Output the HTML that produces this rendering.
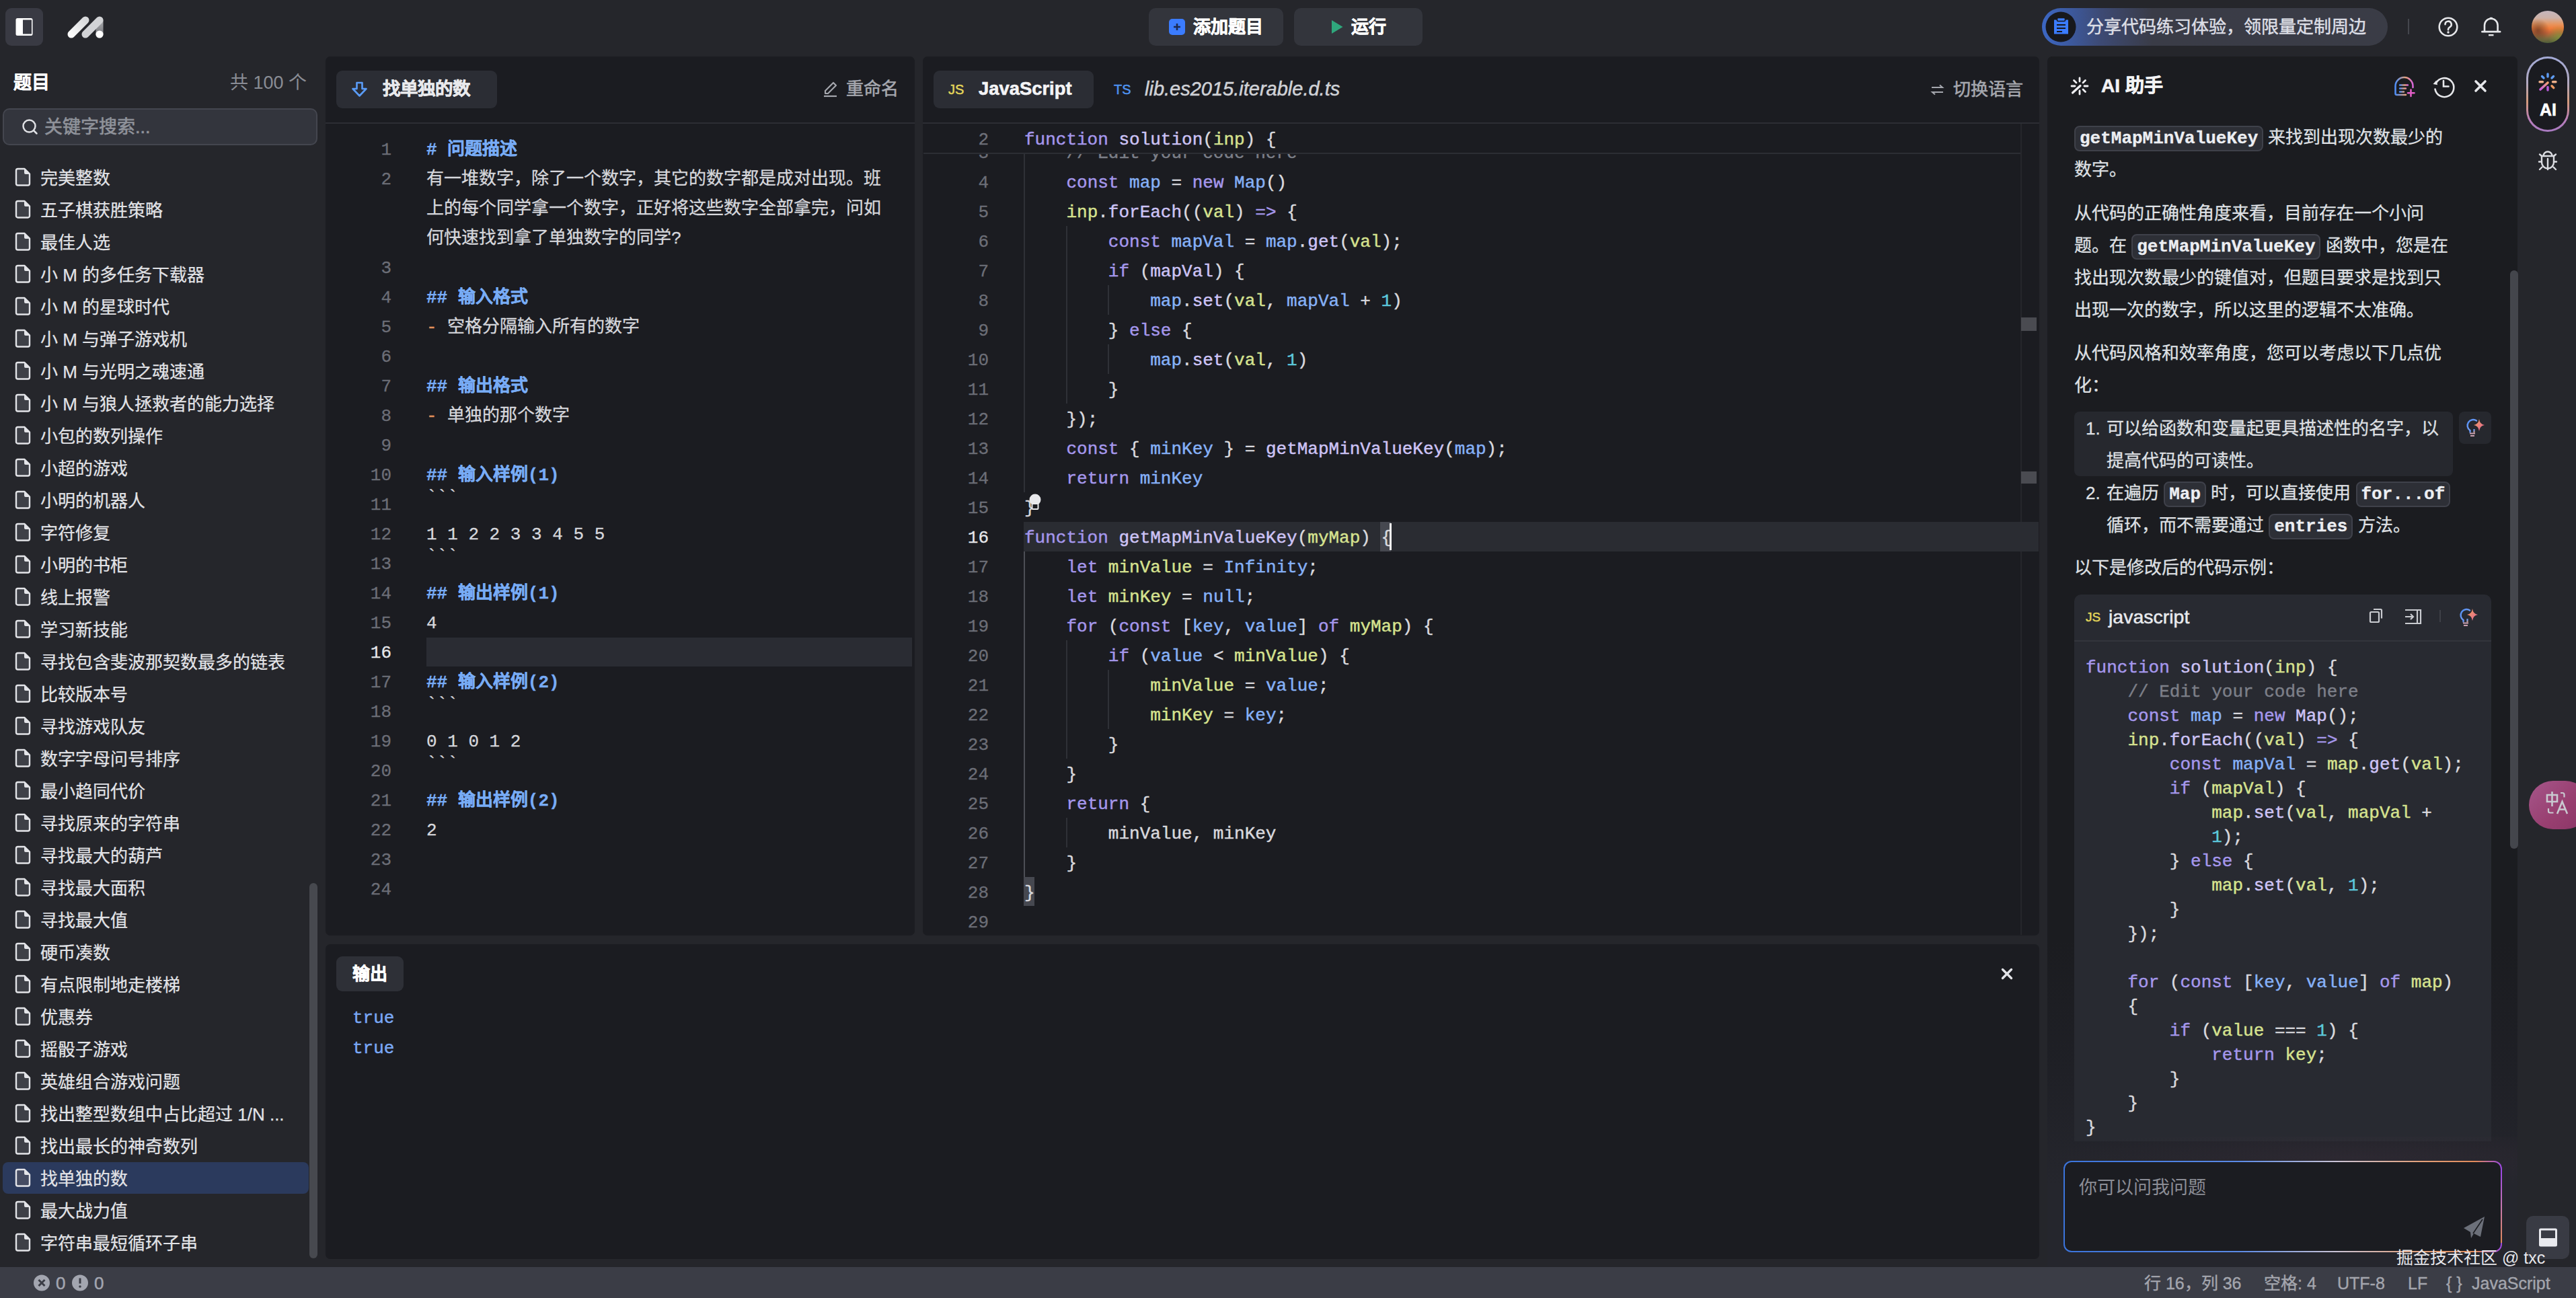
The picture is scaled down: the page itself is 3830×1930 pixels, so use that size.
<!DOCTYPE html><html lang="zh-CN"><head><meta charset="utf-8"><style>
*{box-sizing:border-box}
html,body{margin:0;padding:0;width:3830px;height:1930px;overflow:hidden;background:#25262b;}
body{position:relative;font-family:"Liberation Sans",sans-serif;color:#d9dade;}
div{position:absolute}
.t{white-space:nowrap;font-size:26px}
.m{white-space:nowrap;font-family:"Liberation Mono",monospace;font-size:26px;-webkit-text-stroke:0.45px currentColor}
.kw{color:#a597ec} .fn{color:#cdc3f5} .v{color:#86b1f7} .p{color:#d6e28f} .n{color:#5cc8dc} .pu{color:#d9d9de} .c{color:#7c7f88}
.hd{color:#78acf6;font-weight:bold} .dash{color:#e0915c}
.ln{white-space:nowrap;font-family:"Liberation Mono",monospace;font-size:26px;color:#6e7079;text-align:right;width:80px;-webkit-text-stroke:0.3px currentColor}
.ic{ink:0}
svg{position:absolute;overflow:visible}
@media (max-width:2600px){html{zoom:0.5}}
</style></head><body>
<div style="left:8px;top:12px;width:56px;height:56px;background:#393a43;border-radius:9px"></div>
<svg style="left:0;top:0" width="80" height="80"><rect x="23.5" y="27" width="25" height="26" rx="2.5" fill="#fff"/><rect x="34" y="29.5" width="13" height="21" fill="#393a43"/></svg>
<svg style="left:90px;top:14px" width="80" height="56" viewBox="90 14 80 56">
<defs><linearGradient id="lg1" x1="0" y1="1" x2="1" y2="0"><stop offset="0" stop-color="#fafafa"/><stop offset="1" stop-color="#d8d9db"/></linearGradient>
<linearGradient id="lg2" gradientUnits="userSpaceOnUse" x1="148" y1="25" x2="148" y2="57"><stop offset="0" stop-color="#b5b6ba"/><stop offset="1" stop-color="#6c6d72"/></linearGradient></defs>
<line x1="106" y1="51" x2="127" y2="30" stroke="url(#lg1)" stroke-width="11" stroke-linecap="round"/>
<line x1="148" y1="31" x2="148" y2="51" stroke="url(#lg2)" stroke-width="11" stroke-linecap="round"/>
<line x1="127" y1="51" x2="148" y2="30" stroke="#d2d3d6" stroke-width="11" stroke-linecap="round"/>
<circle cx="148" cy="51" r="5.6" fill="#fff"/>
</svg>
<div style="left:1708px;top:12px;width:200px;height:56px;background:#33353c;border-radius:10px"></div>
<div style="left:1738px;top:28px;width:24px;height:24px;background:#3b7cff;border-radius:5px"></div>
<svg style="left:0;top:0" width="1" height="1"><path d="M1745 40h10M1750 35v10" stroke="#1c2a52" stroke-width="2.6"/></svg>
<div class="t" style="left:1774px;top:12.0px;line-height:56px;color:#fff;font-weight:bold;-webkit-text-stroke:0.6px currentColor;font-size:26px">添加题目</div>
<div style="left:1924px;top:12px;width:191px;height:56px;background:#33353c;border-radius:10px"></div>
<svg style="left:0;top:0" width="1" height="1"><path d="M1980 30L1996.5 40L1980 50Z" fill="#2fa77c"/></svg>
<div class="t" style="left:2009px;top:12.0px;line-height:56px;color:#fff;font-weight:bold;-webkit-text-stroke:0.6px currentColor;font-size:26px">运行</div>
<div style="left:3036px;top:12px;width:514px;height:56px;background:linear-gradient(90deg,#3c67c4 0%,#3d4a74 17%,#3a3c47 32%,#3a3c46 100%);border-radius:28px"></div>
<svg style="left:0;top:0" width="1" height="1"><circle cx="3064" cy="40" r="22.5" fill="#17181c"/><path d="M3054 29.5h21v21h-21z" fill="#3b7cff"/><rect x="3058.5" y="26.5" width="12" height="5" rx="1.5" fill="#3b7cff" stroke="#17181c" stroke-width="1.6"/><path d="M3058 37h13M3058 42h13M3058 47h8" stroke="#17181c" stroke-width="2.2"/></svg>
<div class="t" style="left:3102px;top:12.0px;line-height:56px;color:#dcdee5;font-size:26px;font-weight:500;-webkit-text-stroke:0.5px currentColor">分享代码练习体验，领限量定制周边</div>
<div style="left:3580px;top:28px;width:2px;height:23px;background:#44464d"></div>
<svg style="left:0;top:0" width="1" height="1"><circle cx="3640" cy="40" r="13.3" fill="none" stroke="#e6e7ea" stroke-width="2.6"/><path d="M3635.5 36.2a4.6 4.6 0 1 1 6.8 4.1c-1.4 .8-2.3 1.6-2.3 3.3v.6" fill="none" stroke="#e6e7ea" stroke-width="2.6" stroke-linecap="round"/><circle cx="3640" cy="48" r="1.7" fill="#e6e7ea"/></svg>
<svg style="left:0;top:0" width="1" height="1"><path d="M3694 47v-9.5a9.8 9.8 0 0 1 19.6 0V47" fill="none" stroke="#e6e7ea" stroke-width="2.6"/><path d="M3690.5 47.2h26.5" stroke="#e6e7ea" stroke-width="2.8" stroke-linecap="round"/><path d="M3700 52.2h7.5" stroke="#e6e7ea" stroke-width="2.4"/><rect x="3701.5" y="25.8" width="4.6" height="2.6" rx="1.2" fill="#e6e7ea"/></svg>
<div style="left:3764px;top:16px;width:48px;height:48px;border-radius:50%;background:linear-gradient(180deg,#c4b6bd 0%,#cdb2a8 22%,#e8945c 42%,#ef7b3a 55%,#c8663a 68%,#7d6a3e 85%,#4f5e3a 100%)"></div>
<div style="left:3764px;top:16px;width:48px;height:48px;border-radius:50%;background:radial-gradient(circle at 20% 60%,rgba(60,40,30,.55) 0%,rgba(60,40,30,0) 35%),radial-gradient(circle at 85% 80%,rgba(120,160,60,.6) 0%,rgba(120,160,60,0) 30%)"></div>
<div class="t" style="left:20px;top:101.0px;line-height:44px;color:#fff;font-weight:bold;-webkit-text-stroke:0.2px currentColor;font-size:27px">题目</div>
<div class="t" style="right:3374px;top:101.0px;line-height:44px;text-align:right;color:#8a8d95;font-size:27px">共 100 个</div>
<div style="left:4px;top:161px;width:468px;height:55px;background:#33353d;border:2px solid #44464f;border-radius:10px"></div>
<svg style="left:0;top:0" width="1" height="1"><circle cx="43.5" cy="187.5" r="9" fill="none" stroke="#dfe0e4" stroke-width="2.5"/><path d="M50.5 194.5l4 4" stroke="#dfe0e4" stroke-width="2.5" stroke-linecap="round"/></svg>
<div class="t" style="left:66px;top:167.0px;line-height:44px;color:#8f929a;font-size:27px;-webkit-text-stroke:0.7px currentColor">关键字搜索...</div>
<div style="left:4px;top:1728px;width:455px;height:47px;background:#2b3a5d;border-radius:8px"></div>
<div class="t" style="left:60px;top:243.0px;line-height:44px;color:#e2e3e7;font-size:26px;-webkit-text-stroke:0.25px currentColor">完美整数</div>
<div class="t" style="left:60px;top:291.0px;line-height:44px;color:#e2e3e7;font-size:26px;-webkit-text-stroke:0.25px currentColor">五子棋获胜策略</div>
<div class="t" style="left:60px;top:339.0px;line-height:44px;color:#e2e3e7;font-size:26px;-webkit-text-stroke:0.25px currentColor">最佳人选</div>
<div class="t" style="left:60px;top:387.0px;line-height:44px;color:#e2e3e7;font-size:26px;-webkit-text-stroke:0.25px currentColor">小 M 的多任务下载器</div>
<div class="t" style="left:60px;top:435.0px;line-height:44px;color:#e2e3e7;font-size:26px;-webkit-text-stroke:0.25px currentColor">小 M 的星球时代</div>
<div class="t" style="left:60px;top:483.0px;line-height:44px;color:#e2e3e7;font-size:26px;-webkit-text-stroke:0.25px currentColor">小 M 与弹子游戏机</div>
<div class="t" style="left:60px;top:531.0px;line-height:44px;color:#e2e3e7;font-size:26px;-webkit-text-stroke:0.25px currentColor">小 M 与光明之魂速通</div>
<div class="t" style="left:60px;top:579.0px;line-height:44px;color:#e2e3e7;font-size:26px;-webkit-text-stroke:0.25px currentColor">小 M 与狼人拯救者的能力选择</div>
<div class="t" style="left:60px;top:627.0px;line-height:44px;color:#e2e3e7;font-size:26px;-webkit-text-stroke:0.25px currentColor">小包的数列操作</div>
<div class="t" style="left:60px;top:675.0px;line-height:44px;color:#e2e3e7;font-size:26px;-webkit-text-stroke:0.25px currentColor">小超的游戏</div>
<div class="t" style="left:60px;top:723.0px;line-height:44px;color:#e2e3e7;font-size:26px;-webkit-text-stroke:0.25px currentColor">小明的机器人</div>
<div class="t" style="left:60px;top:771.0px;line-height:44px;color:#e2e3e7;font-size:26px;-webkit-text-stroke:0.25px currentColor">字符修复</div>
<div class="t" style="left:60px;top:819.0px;line-height:44px;color:#e2e3e7;font-size:26px;-webkit-text-stroke:0.25px currentColor">小明的书柜</div>
<div class="t" style="left:60px;top:867.0px;line-height:44px;color:#e2e3e7;font-size:26px;-webkit-text-stroke:0.25px currentColor">线上报警</div>
<div class="t" style="left:60px;top:915.0px;line-height:44px;color:#e2e3e7;font-size:26px;-webkit-text-stroke:0.25px currentColor">学习新技能</div>
<div class="t" style="left:60px;top:963.0px;line-height:44px;color:#e2e3e7;font-size:26px;-webkit-text-stroke:0.25px currentColor">寻找包含斐波那契数最多的链表</div>
<div class="t" style="left:60px;top:1011.0px;line-height:44px;color:#e2e3e7;font-size:26px;-webkit-text-stroke:0.25px currentColor">比较版本号</div>
<div class="t" style="left:60px;top:1059.0px;line-height:44px;color:#e2e3e7;font-size:26px;-webkit-text-stroke:0.25px currentColor">寻找游戏队友</div>
<div class="t" style="left:60px;top:1107.0px;line-height:44px;color:#e2e3e7;font-size:26px;-webkit-text-stroke:0.25px currentColor">数字字母问号排序</div>
<div class="t" style="left:60px;top:1155.0px;line-height:44px;color:#e2e3e7;font-size:26px;-webkit-text-stroke:0.25px currentColor">最小趋同代价</div>
<div class="t" style="left:60px;top:1203.0px;line-height:44px;color:#e2e3e7;font-size:26px;-webkit-text-stroke:0.25px currentColor">寻找原来的字符串</div>
<div class="t" style="left:60px;top:1251.0px;line-height:44px;color:#e2e3e7;font-size:26px;-webkit-text-stroke:0.25px currentColor">寻找最大的葫芦</div>
<div class="t" style="left:60px;top:1299.0px;line-height:44px;color:#e2e3e7;font-size:26px;-webkit-text-stroke:0.25px currentColor">寻找最大面积</div>
<div class="t" style="left:60px;top:1347.0px;line-height:44px;color:#e2e3e7;font-size:26px;-webkit-text-stroke:0.25px currentColor">寻找最大值</div>
<div class="t" style="left:60px;top:1395.0px;line-height:44px;color:#e2e3e7;font-size:26px;-webkit-text-stroke:0.25px currentColor">硬币凑数</div>
<div class="t" style="left:60px;top:1443.0px;line-height:44px;color:#e2e3e7;font-size:26px;-webkit-text-stroke:0.25px currentColor">有点限制地走楼梯</div>
<div class="t" style="left:60px;top:1491.0px;line-height:44px;color:#e2e3e7;font-size:26px;-webkit-text-stroke:0.25px currentColor">优惠券</div>
<div class="t" style="left:60px;top:1539.0px;line-height:44px;color:#e2e3e7;font-size:26px;-webkit-text-stroke:0.25px currentColor">摇骰子游戏</div>
<div class="t" style="left:60px;top:1587.0px;line-height:44px;color:#e2e3e7;font-size:26px;-webkit-text-stroke:0.25px currentColor">英雄组合游戏问题</div>
<div class="t" style="left:60px;top:1635.0px;line-height:44px;color:#e2e3e7;font-size:26px;-webkit-text-stroke:0.25px currentColor">找出整型数组中占比超过 1/N ...</div>
<div class="t" style="left:60px;top:1683.0px;line-height:44px;color:#e2e3e7;font-size:26px;-webkit-text-stroke:0.25px currentColor">找出最长的神奇数列</div>
<div class="t" style="left:60px;top:1731.0px;line-height:44px;color:#e2e3e7;font-size:26px;-webkit-text-stroke:0.25px currentColor">找单独的数</div>
<div class="t" style="left:60px;top:1779.0px;line-height:44px;color:#e2e3e7;font-size:26px;-webkit-text-stroke:0.25px currentColor">最大战力值</div>
<div class="t" style="left:60px;top:1827.0px;line-height:44px;color:#e2e3e7;font-size:26px;-webkit-text-stroke:0.25px currentColor">字符串最短循环子串</div>
<svg style="left:0;top:0" width="1" height="1"><path d="M26.5 251h10l7.5 7.5v14.5a2.5 2.5 0 0 1-2.5 2.5h-15a2.5 2.5 0 0 1-2.5-2.5v-19.5a2.5 2.5 0 0 1 2.5-2.5z" fill="#3e4047" stroke="#e3e4e8" stroke-width="2.4" stroke-linejoin="round"/><path d="M36 250.5v6.5a2 2 0 0 0 2 2h6.5z" fill="#e3e4e8"/><path d="M26.5 299h10l7.5 7.5v14.5a2.5 2.5 0 0 1-2.5 2.5h-15a2.5 2.5 0 0 1-2.5-2.5v-19.5a2.5 2.5 0 0 1 2.5-2.5z" fill="#3e4047" stroke="#e3e4e8" stroke-width="2.4" stroke-linejoin="round"/><path d="M36 298.5v6.5a2 2 0 0 0 2 2h6.5z" fill="#e3e4e8"/><path d="M26.5 347h10l7.5 7.5v14.5a2.5 2.5 0 0 1-2.5 2.5h-15a2.5 2.5 0 0 1-2.5-2.5v-19.5a2.5 2.5 0 0 1 2.5-2.5z" fill="#3e4047" stroke="#e3e4e8" stroke-width="2.4" stroke-linejoin="round"/><path d="M36 346.5v6.5a2 2 0 0 0 2 2h6.5z" fill="#e3e4e8"/><path d="M26.5 395h10l7.5 7.5v14.5a2.5 2.5 0 0 1-2.5 2.5h-15a2.5 2.5 0 0 1-2.5-2.5v-19.5a2.5 2.5 0 0 1 2.5-2.5z" fill="#3e4047" stroke="#e3e4e8" stroke-width="2.4" stroke-linejoin="round"/><path d="M36 394.5v6.5a2 2 0 0 0 2 2h6.5z" fill="#e3e4e8"/><path d="M26.5 443h10l7.5 7.5v14.5a2.5 2.5 0 0 1-2.5 2.5h-15a2.5 2.5 0 0 1-2.5-2.5v-19.5a2.5 2.5 0 0 1 2.5-2.5z" fill="#3e4047" stroke="#e3e4e8" stroke-width="2.4" stroke-linejoin="round"/><path d="M36 442.5v6.5a2 2 0 0 0 2 2h6.5z" fill="#e3e4e8"/><path d="M26.5 491h10l7.5 7.5v14.5a2.5 2.5 0 0 1-2.5 2.5h-15a2.5 2.5 0 0 1-2.5-2.5v-19.5a2.5 2.5 0 0 1 2.5-2.5z" fill="#3e4047" stroke="#e3e4e8" stroke-width="2.4" stroke-linejoin="round"/><path d="M36 490.5v6.5a2 2 0 0 0 2 2h6.5z" fill="#e3e4e8"/><path d="M26.5 539h10l7.5 7.5v14.5a2.5 2.5 0 0 1-2.5 2.5h-15a2.5 2.5 0 0 1-2.5-2.5v-19.5a2.5 2.5 0 0 1 2.5-2.5z" fill="#3e4047" stroke="#e3e4e8" stroke-width="2.4" stroke-linejoin="round"/><path d="M36 538.5v6.5a2 2 0 0 0 2 2h6.5z" fill="#e3e4e8"/><path d="M26.5 587h10l7.5 7.5v14.5a2.5 2.5 0 0 1-2.5 2.5h-15a2.5 2.5 0 0 1-2.5-2.5v-19.5a2.5 2.5 0 0 1 2.5-2.5z" fill="#3e4047" stroke="#e3e4e8" stroke-width="2.4" stroke-linejoin="round"/><path d="M36 586.5v6.5a2 2 0 0 0 2 2h6.5z" fill="#e3e4e8"/><path d="M26.5 635h10l7.5 7.5v14.5a2.5 2.5 0 0 1-2.5 2.5h-15a2.5 2.5 0 0 1-2.5-2.5v-19.5a2.5 2.5 0 0 1 2.5-2.5z" fill="#3e4047" stroke="#e3e4e8" stroke-width="2.4" stroke-linejoin="round"/><path d="M36 634.5v6.5a2 2 0 0 0 2 2h6.5z" fill="#e3e4e8"/><path d="M26.5 683h10l7.5 7.5v14.5a2.5 2.5 0 0 1-2.5 2.5h-15a2.5 2.5 0 0 1-2.5-2.5v-19.5a2.5 2.5 0 0 1 2.5-2.5z" fill="#3e4047" stroke="#e3e4e8" stroke-width="2.4" stroke-linejoin="round"/><path d="M36 682.5v6.5a2 2 0 0 0 2 2h6.5z" fill="#e3e4e8"/><path d="M26.5 731h10l7.5 7.5v14.5a2.5 2.5 0 0 1-2.5 2.5h-15a2.5 2.5 0 0 1-2.5-2.5v-19.5a2.5 2.5 0 0 1 2.5-2.5z" fill="#3e4047" stroke="#e3e4e8" stroke-width="2.4" stroke-linejoin="round"/><path d="M36 730.5v6.5a2 2 0 0 0 2 2h6.5z" fill="#e3e4e8"/><path d="M26.5 779h10l7.5 7.5v14.5a2.5 2.5 0 0 1-2.5 2.5h-15a2.5 2.5 0 0 1-2.5-2.5v-19.5a2.5 2.5 0 0 1 2.5-2.5z" fill="#3e4047" stroke="#e3e4e8" stroke-width="2.4" stroke-linejoin="round"/><path d="M36 778.5v6.5a2 2 0 0 0 2 2h6.5z" fill="#e3e4e8"/><path d="M26.5 827h10l7.5 7.5v14.5a2.5 2.5 0 0 1-2.5 2.5h-15a2.5 2.5 0 0 1-2.5-2.5v-19.5a2.5 2.5 0 0 1 2.5-2.5z" fill="#3e4047" stroke="#e3e4e8" stroke-width="2.4" stroke-linejoin="round"/><path d="M36 826.5v6.5a2 2 0 0 0 2 2h6.5z" fill="#e3e4e8"/><path d="M26.5 875h10l7.5 7.5v14.5a2.5 2.5 0 0 1-2.5 2.5h-15a2.5 2.5 0 0 1-2.5-2.5v-19.5a2.5 2.5 0 0 1 2.5-2.5z" fill="#3e4047" stroke="#e3e4e8" stroke-width="2.4" stroke-linejoin="round"/><path d="M36 874.5v6.5a2 2 0 0 0 2 2h6.5z" fill="#e3e4e8"/><path d="M26.5 923h10l7.5 7.5v14.5a2.5 2.5 0 0 1-2.5 2.5h-15a2.5 2.5 0 0 1-2.5-2.5v-19.5a2.5 2.5 0 0 1 2.5-2.5z" fill="#3e4047" stroke="#e3e4e8" stroke-width="2.4" stroke-linejoin="round"/><path d="M36 922.5v6.5a2 2 0 0 0 2 2h6.5z" fill="#e3e4e8"/><path d="M26.5 971h10l7.5 7.5v14.5a2.5 2.5 0 0 1-2.5 2.5h-15a2.5 2.5 0 0 1-2.5-2.5v-19.5a2.5 2.5 0 0 1 2.5-2.5z" fill="#3e4047" stroke="#e3e4e8" stroke-width="2.4" stroke-linejoin="round"/><path d="M36 970.5v6.5a2 2 0 0 0 2 2h6.5z" fill="#e3e4e8"/><path d="M26.5 1019h10l7.5 7.5v14.5a2.5 2.5 0 0 1-2.5 2.5h-15a2.5 2.5 0 0 1-2.5-2.5v-19.5a2.5 2.5 0 0 1 2.5-2.5z" fill="#3e4047" stroke="#e3e4e8" stroke-width="2.4" stroke-linejoin="round"/><path d="M36 1018.5v6.5a2 2 0 0 0 2 2h6.5z" fill="#e3e4e8"/><path d="M26.5 1067h10l7.5 7.5v14.5a2.5 2.5 0 0 1-2.5 2.5h-15a2.5 2.5 0 0 1-2.5-2.5v-19.5a2.5 2.5 0 0 1 2.5-2.5z" fill="#3e4047" stroke="#e3e4e8" stroke-width="2.4" stroke-linejoin="round"/><path d="M36 1066.5v6.5a2 2 0 0 0 2 2h6.5z" fill="#e3e4e8"/><path d="M26.5 1115h10l7.5 7.5v14.5a2.5 2.5 0 0 1-2.5 2.5h-15a2.5 2.5 0 0 1-2.5-2.5v-19.5a2.5 2.5 0 0 1 2.5-2.5z" fill="#3e4047" stroke="#e3e4e8" stroke-width="2.4" stroke-linejoin="round"/><path d="M36 1114.5v6.5a2 2 0 0 0 2 2h6.5z" fill="#e3e4e8"/><path d="M26.5 1163h10l7.5 7.5v14.5a2.5 2.5 0 0 1-2.5 2.5h-15a2.5 2.5 0 0 1-2.5-2.5v-19.5a2.5 2.5 0 0 1 2.5-2.5z" fill="#3e4047" stroke="#e3e4e8" stroke-width="2.4" stroke-linejoin="round"/><path d="M36 1162.5v6.5a2 2 0 0 0 2 2h6.5z" fill="#e3e4e8"/><path d="M26.5 1211h10l7.5 7.5v14.5a2.5 2.5 0 0 1-2.5 2.5h-15a2.5 2.5 0 0 1-2.5-2.5v-19.5a2.5 2.5 0 0 1 2.5-2.5z" fill="#3e4047" stroke="#e3e4e8" stroke-width="2.4" stroke-linejoin="round"/><path d="M36 1210.5v6.5a2 2 0 0 0 2 2h6.5z" fill="#e3e4e8"/><path d="M26.5 1259h10l7.5 7.5v14.5a2.5 2.5 0 0 1-2.5 2.5h-15a2.5 2.5 0 0 1-2.5-2.5v-19.5a2.5 2.5 0 0 1 2.5-2.5z" fill="#3e4047" stroke="#e3e4e8" stroke-width="2.4" stroke-linejoin="round"/><path d="M36 1258.5v6.5a2 2 0 0 0 2 2h6.5z" fill="#e3e4e8"/><path d="M26.5 1307h10l7.5 7.5v14.5a2.5 2.5 0 0 1-2.5 2.5h-15a2.5 2.5 0 0 1-2.5-2.5v-19.5a2.5 2.5 0 0 1 2.5-2.5z" fill="#3e4047" stroke="#e3e4e8" stroke-width="2.4" stroke-linejoin="round"/><path d="M36 1306.5v6.5a2 2 0 0 0 2 2h6.5z" fill="#e3e4e8"/><path d="M26.5 1355h10l7.5 7.5v14.5a2.5 2.5 0 0 1-2.5 2.5h-15a2.5 2.5 0 0 1-2.5-2.5v-19.5a2.5 2.5 0 0 1 2.5-2.5z" fill="#3e4047" stroke="#e3e4e8" stroke-width="2.4" stroke-linejoin="round"/><path d="M36 1354.5v6.5a2 2 0 0 0 2 2h6.5z" fill="#e3e4e8"/><path d="M26.5 1403h10l7.5 7.5v14.5a2.5 2.5 0 0 1-2.5 2.5h-15a2.5 2.5 0 0 1-2.5-2.5v-19.5a2.5 2.5 0 0 1 2.5-2.5z" fill="#3e4047" stroke="#e3e4e8" stroke-width="2.4" stroke-linejoin="round"/><path d="M36 1402.5v6.5a2 2 0 0 0 2 2h6.5z" fill="#e3e4e8"/><path d="M26.5 1451h10l7.5 7.5v14.5a2.5 2.5 0 0 1-2.5 2.5h-15a2.5 2.5 0 0 1-2.5-2.5v-19.5a2.5 2.5 0 0 1 2.5-2.5z" fill="#3e4047" stroke="#e3e4e8" stroke-width="2.4" stroke-linejoin="round"/><path d="M36 1450.5v6.5a2 2 0 0 0 2 2h6.5z" fill="#e3e4e8"/><path d="M26.5 1499h10l7.5 7.5v14.5a2.5 2.5 0 0 1-2.5 2.5h-15a2.5 2.5 0 0 1-2.5-2.5v-19.5a2.5 2.5 0 0 1 2.5-2.5z" fill="#3e4047" stroke="#e3e4e8" stroke-width="2.4" stroke-linejoin="round"/><path d="M36 1498.5v6.5a2 2 0 0 0 2 2h6.5z" fill="#e3e4e8"/><path d="M26.5 1547h10l7.5 7.5v14.5a2.5 2.5 0 0 1-2.5 2.5h-15a2.5 2.5 0 0 1-2.5-2.5v-19.5a2.5 2.5 0 0 1 2.5-2.5z" fill="#3e4047" stroke="#e3e4e8" stroke-width="2.4" stroke-linejoin="round"/><path d="M36 1546.5v6.5a2 2 0 0 0 2 2h6.5z" fill="#e3e4e8"/><path d="M26.5 1595h10l7.5 7.5v14.5a2.5 2.5 0 0 1-2.5 2.5h-15a2.5 2.5 0 0 1-2.5-2.5v-19.5a2.5 2.5 0 0 1 2.5-2.5z" fill="#3e4047" stroke="#e3e4e8" stroke-width="2.4" stroke-linejoin="round"/><path d="M36 1594.5v6.5a2 2 0 0 0 2 2h6.5z" fill="#e3e4e8"/><path d="M26.5 1643h10l7.5 7.5v14.5a2.5 2.5 0 0 1-2.5 2.5h-15a2.5 2.5 0 0 1-2.5-2.5v-19.5a2.5 2.5 0 0 1 2.5-2.5z" fill="#3e4047" stroke="#e3e4e8" stroke-width="2.4" stroke-linejoin="round"/><path d="M36 1642.5v6.5a2 2 0 0 0 2 2h6.5z" fill="#e3e4e8"/><path d="M26.5 1691h10l7.5 7.5v14.5a2.5 2.5 0 0 1-2.5 2.5h-15a2.5 2.5 0 0 1-2.5-2.5v-19.5a2.5 2.5 0 0 1 2.5-2.5z" fill="#3e4047" stroke="#e3e4e8" stroke-width="2.4" stroke-linejoin="round"/><path d="M36 1690.5v6.5a2 2 0 0 0 2 2h6.5z" fill="#e3e4e8"/><path d="M26.5 1739h10l7.5 7.5v14.5a2.5 2.5 0 0 1-2.5 2.5h-15a2.5 2.5 0 0 1-2.5-2.5v-19.5a2.5 2.5 0 0 1 2.5-2.5z" fill="#464c62" stroke="#e3e4e8" stroke-width="2.4" stroke-linejoin="round"/><path d="M36 1738.5v6.5a2 2 0 0 0 2 2h6.5z" fill="#e3e4e8"/><path d="M26.5 1787h10l7.5 7.5v14.5a2.5 2.5 0 0 1-2.5 2.5h-15a2.5 2.5 0 0 1-2.5-2.5v-19.5a2.5 2.5 0 0 1 2.5-2.5z" fill="#3e4047" stroke="#e3e4e8" stroke-width="2.4" stroke-linejoin="round"/><path d="M36 1786.5v6.5a2 2 0 0 0 2 2h6.5z" fill="#e3e4e8"/><path d="M26.5 1835h10l7.5 7.5v14.5a2.5 2.5 0 0 1-2.5 2.5h-15a2.5 2.5 0 0 1-2.5-2.5v-19.5a2.5 2.5 0 0 1 2.5-2.5z" fill="#3e4047" stroke="#e3e4e8" stroke-width="2.4" stroke-linejoin="round"/><path d="M36 1834.5v6.5a2 2 0 0 0 2 2h6.5z" fill="#e3e4e8"/></svg>
<div style="left:460px;top:1313px;width:12px;height:558px;background:#47494f;border-radius:6px"></div>
<div style="left:484px;top:84px;width:876px;height:1307px;background:#1b1c21;border-radius:7px"></div>
<div style="left:500px;top:105px;width:239px;height:56px;background:#2b2d34;border-radius:9px"></div>
<svg style="left:0;top:0" width="1" height="1"><path d="M530.5 123h8v9h6l-10 10.5l-10-10.5h6z" fill="none" stroke="#5a9cf8" stroke-width="2.6" stroke-linejoin="round"/></svg>
<div class="t" style="left:569px;top:104.0px;line-height:56px;color:#e8e9ec;font-weight:bold;-webkit-text-stroke:0.6px currentColor;font-size:26.5px">找单独的数</div>
<svg style="left:0;top:0" width="1" height="1"><path d="M1227 135l12-12l4 4l-12 12h-4z" fill="none" stroke="#a5a7ae" stroke-width="2.2" stroke-linejoin="round"/><path d="M1225 143h19" stroke="#a5a7ae" stroke-width="2.2"/></svg>
<div class="t" style="left:1258px;top:104.0px;line-height:56px;color:#a5a7ae;font-size:26px;-webkit-text-stroke:0.6px currentColor">重命名</div>
<div style="left:484px;top:182px;width:876px;height:2px;background:#2c2e34"></div>
<div style="left:634px;top:948px;width:722px;height:43px;background:#2a2c33"></div>
<div class="ln" style="left:502px;top:201.1px;line-height:44px;color:#6c6e77">1</div>
<div class="m" style="left:634px;top:201.1px;line-height:44px;font-family:'Liberation Mono',monospace;color:#d6d7dc;-webkit-text-stroke:0.3px currentColor"><span class="hd"># 问题描述</span></div>
<div class="ln" style="left:502px;top:245.3px;line-height:44px;color:#6c6e77">2</div>
<div class="m" style="left:634px;top:245.3px;line-height:44px;font-family:'Liberation Mono',monospace;color:#d6d7dc;-webkit-text-stroke:0.3px currentColor">有一堆数字，除了一个数字，其它的数字都是成对出现。班</div>
<div class="m" style="left:634px;top:289.3px;line-height:44px;font-family:'Liberation Mono',monospace;color:#d6d7dc;-webkit-text-stroke:0.3px currentColor">上的每个同学拿一个数字，正好将这些数字全部拿完，问如</div>
<div class="m" style="left:634px;top:333.3px;line-height:44px;font-family:'Liberation Mono',monospace;color:#d6d7dc;-webkit-text-stroke:0.3px currentColor">何快速找到拿了单独数字的同学?</div>
<div class="ln" style="left:502px;top:377.1px;line-height:44px;color:#6c6e77">3</div>
<div class="ln" style="left:502px;top:421.1px;line-height:44px;color:#6c6e77">4</div>
<div class="m" style="left:634px;top:421.1px;line-height:44px;font-family:'Liberation Mono',monospace;color:#d6d7dc;-webkit-text-stroke:0.3px currentColor"><span class="hd">## 输入格式</span></div>
<div class="ln" style="left:502px;top:465.1px;line-height:44px;color:#6c6e77">5</div>
<div class="m" style="left:634px;top:465.1px;line-height:44px;font-family:'Liberation Mono',monospace;color:#d6d7dc;-webkit-text-stroke:0.3px currentColor"><span class="dash">-</span> 空格分隔输入所有的数字</div>
<div class="ln" style="left:502px;top:509.1px;line-height:44px;color:#6c6e77">6</div>
<div class="ln" style="left:502px;top:553.1px;line-height:44px;color:#6c6e77">7</div>
<div class="m" style="left:634px;top:553.1px;line-height:44px;font-family:'Liberation Mono',monospace;color:#d6d7dc;-webkit-text-stroke:0.3px currentColor"><span class="hd">## 输出格式</span></div>
<div class="ln" style="left:502px;top:597.1px;line-height:44px;color:#6c6e77">8</div>
<div class="m" style="left:634px;top:597.1px;line-height:44px;font-family:'Liberation Mono',monospace;color:#d6d7dc;-webkit-text-stroke:0.3px currentColor"><span class="dash">-</span> 单独的那个数字</div>
<div class="ln" style="left:502px;top:641.1px;line-height:44px;color:#6c6e77">9</div>
<div class="ln" style="left:502px;top:685.1px;line-height:44px;color:#6c6e77">10</div>
<div class="m" style="left:634px;top:685.1px;line-height:44px;font-family:'Liberation Mono',monospace;color:#d6d7dc;-webkit-text-stroke:0.3px currentColor"><span class="hd">## 输入样例(1)</span></div>
<div class="ln" style="left:502px;top:729.1px;line-height:44px;color:#6c6e77">11</div>
<div class="m" style="left:634px;top:729.1px;line-height:44px;font-family:'Liberation Mono',monospace;color:#d6d7dc;-webkit-text-stroke:0.3px currentColor"><span style="position:relative;top:-12px">```</span></div>
<div class="ln" style="left:502px;top:773.1px;line-height:44px;color:#6c6e77">12</div>
<div class="m" style="left:634px;top:773.1px;line-height:44px;font-family:'Liberation Mono',monospace;color:#d6d7dc;-webkit-text-stroke:0.3px currentColor">1 1 2 2 3 3 4 5 5</div>
<div class="ln" style="left:502px;top:817.1px;line-height:44px;color:#6c6e77">13</div>
<div class="m" style="left:634px;top:817.1px;line-height:44px;font-family:'Liberation Mono',monospace;color:#d6d7dc;-webkit-text-stroke:0.3px currentColor"><span style="position:relative;top:-12px">```</span></div>
<div class="ln" style="left:502px;top:861.1px;line-height:44px;color:#6c6e77">14</div>
<div class="m" style="left:634px;top:861.1px;line-height:44px;font-family:'Liberation Mono',monospace;color:#d6d7dc;-webkit-text-stroke:0.3px currentColor"><span class="hd">## 输出样例(1)</span></div>
<div class="ln" style="left:502px;top:905.1px;line-height:44px;color:#6c6e77">15</div>
<div class="m" style="left:634px;top:905.1px;line-height:44px;font-family:'Liberation Mono',monospace;color:#d6d7dc;-webkit-text-stroke:0.3px currentColor">4</div>
<div class="ln" style="left:502px;top:949.1px;line-height:44px;color:#e6e7ea">16</div>
<div class="ln" style="left:502px;top:993.1px;line-height:44px;color:#6c6e77">17</div>
<div class="m" style="left:634px;top:993.1px;line-height:44px;font-family:'Liberation Mono',monospace;color:#d6d7dc;-webkit-text-stroke:0.3px currentColor"><span class="hd">## 输入样例(2)</span></div>
<div class="ln" style="left:502px;top:1037.1px;line-height:44px;color:#6c6e77">18</div>
<div class="m" style="left:634px;top:1037.1px;line-height:44px;font-family:'Liberation Mono',monospace;color:#d6d7dc;-webkit-text-stroke:0.3px currentColor"><span style="position:relative;top:-12px">```</span></div>
<div class="ln" style="left:502px;top:1081.1px;line-height:44px;color:#6c6e77">19</div>
<div class="m" style="left:634px;top:1081.1px;line-height:44px;font-family:'Liberation Mono',monospace;color:#d6d7dc;-webkit-text-stroke:0.3px currentColor">0 1 0 1 2</div>
<div class="ln" style="left:502px;top:1125.1px;line-height:44px;color:#6c6e77">20</div>
<div class="m" style="left:634px;top:1125.1px;line-height:44px;font-family:'Liberation Mono',monospace;color:#d6d7dc;-webkit-text-stroke:0.3px currentColor"><span style="position:relative;top:-12px">```</span></div>
<div class="ln" style="left:502px;top:1169.1px;line-height:44px;color:#6c6e77">21</div>
<div class="m" style="left:634px;top:1169.1px;line-height:44px;font-family:'Liberation Mono',monospace;color:#d6d7dc;-webkit-text-stroke:0.3px currentColor"><span class="hd">## 输出样例(2)</span></div>
<div class="ln" style="left:502px;top:1213.1px;line-height:44px;color:#6c6e77">22</div>
<div class="m" style="left:634px;top:1213.1px;line-height:44px;font-family:'Liberation Mono',monospace;color:#d6d7dc;-webkit-text-stroke:0.3px currentColor">2</div>
<div class="ln" style="left:502px;top:1257.1px;line-height:44px;color:#6c6e77">23</div>
<div class="ln" style="left:502px;top:1301.1px;line-height:44px;color:#6c6e77">24</div>
<div style="left:1372px;top:84px;width:1660px;height:1307px;background:#1b1c21;border-radius:7px"></div>
<div style="left:1388px;top:105px;width:238px;height:56px;background:#2b2d34;border-radius:9px"></div>
<div class="t" style="left:1410px;top:105.0px;line-height:56px;color:#e2d45a;font-size:20px;-webkit-text-stroke:0.5px currentColor">JS</div>
<div class="t" style="left:1455px;top:104.0px;line-height:56px;color:#f4f4f6;font-weight:bold;-webkit-text-stroke:0.6px currentColor;font-size:27.4px">JavaScript</div>
<div class="t" style="left:1656px;top:105.0px;line-height:56px;color:#4f93f0;font-size:20px;-webkit-text-stroke:0.5px currentColor">TS</div>
<div class="t" style="left:1702px;top:104.0px;line-height:56px;color:#cfd1d6;font-style:italic;font-size:29px;-webkit-text-stroke:0.5px currentColor">lib.es2015.iterable.d.ts</div>
<svg style="left:0;top:0" width="1" height="1"><path d="M2872 130h16l-4-3.5M2889 137h-16l4 3.5" fill="none" stroke="#a5a7ae" stroke-width="2"/></svg>
<div class="t" style="left:2904px;top:105.0px;line-height:56px;color:#a5a7ae;font-size:26px;-webkit-text-stroke:0.6px currentColor">切换语言</div>
<div style="left:1372px;top:182px;width:1660px;height:2px;background:#2c2e34"></div>
<div style="left:3004px;top:184px;width:2px;height:1206px;background:#26272c"></div>
<div style="left:3005px;top:472px;width:23px;height:20px;background:#4a4b51"></div>
<div style="left:3005px;top:701px;width:23px;height:18px;background:#4a4b51"></div>
<div style="left:1522px;top:776px;width:1509px;height:44px;background:#2a2c32"></div>
<div style="left:1522px;top:1304px;width:16px;height:43px;background:#464850"></div>
<div style="left:2052px;top:776px;width:16px;height:44px;background:#464850"></div>
<div style="left:1522px;top:228px;width:2px;height:504px;background:#2f3137"></div>
<div style="left:1585px;top:336px;width:2px;height:264px;background:#2f3137"></div>
<div style="left:1647px;top:424px;width:2px;height:44px;background:#2f3137"></div>
<div style="left:1647px;top:512px;width:2px;height:44px;background:#2f3137"></div>
<div style="left:1522px;top:820px;width:2px;height:484px;background:#4c4e55"></div>
<div style="left:1585px;top:952px;width:2px;height:176px;background:#2f3137"></div>
<div style="left:1585px;top:1216px;width:2px;height:44px;background:#2f3137"></div>
<div style="left:1647px;top:996px;width:2px;height:88px;background:#2f3137"></div>
<div class="ln" style="left:1390px;top:205.5px;line-height:44px;color:#6c6e77">3</div>
<div class="m" style="left:1523px;top:205.5px;line-height:44px;">&nbsp;&nbsp;&nbsp;&nbsp;<span class="c">// Edit your code here</span></div>
<div class="ln" style="left:1390px;top:249.5px;line-height:44px;color:#6c6e77">4</div>
<div class="m" style="left:1523px;top:249.5px;line-height:44px;">&nbsp;&nbsp;&nbsp;&nbsp;<span class="kw">const</span> <span class="v">map</span> <span class="pu">=</span> <span class="kw">new</span> <span class="v">Map</span><span class="pu">()</span></div>
<div class="ln" style="left:1390px;top:293.5px;line-height:44px;color:#6c6e77">5</div>
<div class="m" style="left:1523px;top:293.5px;line-height:44px;">&nbsp;&nbsp;&nbsp;&nbsp;<span class="p">inp</span><span class="pu">.</span><span class="fn">forEach</span><span class="pu">((</span><span class="p">val</span><span class="pu">)</span> <span class="kw">=&gt;</span> <span class="pu">{</span></div>
<div class="ln" style="left:1390px;top:337.5px;line-height:44px;color:#6c6e77">6</div>
<div class="m" style="left:1523px;top:337.5px;line-height:44px;">&nbsp;&nbsp;&nbsp;&nbsp;&nbsp;&nbsp;&nbsp;&nbsp;<span class="kw">const</span> <span class="v">mapVal</span> <span class="pu">=</span> <span class="v">map</span><span class="pu">.</span><span class="fn">get</span><span class="pu">(</span><span class="p">val</span><span class="pu">);</span></div>
<div class="ln" style="left:1390px;top:381.5px;line-height:44px;color:#6c6e77">7</div>
<div class="m" style="left:1523px;top:381.5px;line-height:44px;">&nbsp;&nbsp;&nbsp;&nbsp;&nbsp;&nbsp;&nbsp;&nbsp;<span class="kw">if</span> <span class="pu">(</span><span class="fn">mapVal</span><span class="pu">)</span> <span class="pu">{</span></div>
<div class="ln" style="left:1390px;top:425.5px;line-height:44px;color:#6c6e77">8</div>
<div class="m" style="left:1523px;top:425.5px;line-height:44px;">&nbsp;&nbsp;&nbsp;&nbsp;&nbsp;&nbsp;&nbsp;&nbsp;&nbsp;&nbsp;&nbsp;&nbsp;<span class="v">map</span><span class="pu">.</span><span class="fn">set</span><span class="pu">(</span><span class="p">val</span><span class="pu">,</span> <span class="v">mapVal</span> <span class="pu">+</span> <span class="n">1</span><span class="pu">)</span></div>
<div class="ln" style="left:1390px;top:469.5px;line-height:44px;color:#6c6e77">9</div>
<div class="m" style="left:1523px;top:469.5px;line-height:44px;">&nbsp;&nbsp;&nbsp;&nbsp;&nbsp;&nbsp;&nbsp;&nbsp;<span class="pu">}</span> <span class="kw">else</span> <span class="pu">{</span></div>
<div class="ln" style="left:1390px;top:513.5px;line-height:44px;color:#6c6e77">10</div>
<div class="m" style="left:1523px;top:513.5px;line-height:44px;">&nbsp;&nbsp;&nbsp;&nbsp;&nbsp;&nbsp;&nbsp;&nbsp;&nbsp;&nbsp;&nbsp;&nbsp;<span class="v">map</span><span class="pu">.</span><span class="fn">set</span><span class="pu">(</span><span class="p">val</span><span class="pu">,</span> <span class="n">1</span><span class="pu">)</span></div>
<div class="ln" style="left:1390px;top:557.5px;line-height:44px;color:#6c6e77">11</div>
<div class="m" style="left:1523px;top:557.5px;line-height:44px;">&nbsp;&nbsp;&nbsp;&nbsp;&nbsp;&nbsp;&nbsp;&nbsp;<span class="pu">}</span></div>
<div class="ln" style="left:1390px;top:601.5px;line-height:44px;color:#6c6e77">12</div>
<div class="m" style="left:1523px;top:601.5px;line-height:44px;">&nbsp;&nbsp;&nbsp;&nbsp;<span class="pu">});</span></div>
<div class="ln" style="left:1390px;top:645.5px;line-height:44px;color:#6c6e77">13</div>
<div class="m" style="left:1523px;top:645.5px;line-height:44px;">&nbsp;&nbsp;&nbsp;&nbsp;<span class="kw">const</span> <span class="pu">{</span> <span class="v">minKey</span> <span class="pu">}</span> <span class="pu">=</span> <span class="fn">getMapMinValueKey</span><span class="pu">(</span><span class="v">map</span><span class="pu">);</span></div>
<div class="ln" style="left:1390px;top:689.5px;line-height:44px;color:#6c6e77">14</div>
<div class="m" style="left:1523px;top:689.5px;line-height:44px;">&nbsp;&nbsp;&nbsp;&nbsp;<span class="kw">return</span> <span class="v">minKey</span></div>
<div class="ln" style="left:1390px;top:733.5px;line-height:44px;color:#6c6e77">15</div>
<div class="m" style="left:1523px;top:733.5px;line-height:44px;"><span class="pu">}</span></div>
<div class="ln" style="left:1390px;top:777.5px;line-height:44px;color:#e6e7ea">16</div>
<div class="m" style="left:1523px;top:777.5px;line-height:44px;"><span class="kw">function</span> <span class="fn">getMapMinValueKey</span><span class="pu">(</span><span class="p">myMap</span><span class="pu">)</span> <span class="pu">{</span></div>
<div class="ln" style="left:1390px;top:821.5px;line-height:44px;color:#6c6e77">17</div>
<div class="m" style="left:1523px;top:821.5px;line-height:44px;">&nbsp;&nbsp;&nbsp;&nbsp;<span class="kw">let</span> <span class="p">minValue</span> <span class="pu">=</span> <span class="v">Infinity</span><span class="pu">;</span></div>
<div class="ln" style="left:1390px;top:865.5px;line-height:44px;color:#6c6e77">18</div>
<div class="m" style="left:1523px;top:865.5px;line-height:44px;">&nbsp;&nbsp;&nbsp;&nbsp;<span class="kw">let</span> <span class="p">minKey</span> <span class="pu">=</span> <span class="v">null</span><span class="pu">;</span></div>
<div class="ln" style="left:1390px;top:909.5px;line-height:44px;color:#6c6e77">19</div>
<div class="m" style="left:1523px;top:909.5px;line-height:44px;">&nbsp;&nbsp;&nbsp;&nbsp;<span class="kw">for</span> <span class="pu">(</span><span class="kw">const</span> <span class="pu">[</span><span class="v">key</span><span class="pu">,</span> <span class="v">value</span><span class="pu">]</span> <span class="kw">of</span> <span class="p">myMap</span><span class="pu">)</span> <span class="pu">{</span></div>
<div class="ln" style="left:1390px;top:953.5px;line-height:44px;color:#6c6e77">20</div>
<div class="m" style="left:1523px;top:953.5px;line-height:44px;">&nbsp;&nbsp;&nbsp;&nbsp;&nbsp;&nbsp;&nbsp;&nbsp;<span class="kw">if</span> <span class="pu">(</span><span class="v">value</span> <span class="pu">&lt;</span> <span class="p">minValue</span><span class="pu">)</span> <span class="pu">{</span></div>
<div class="ln" style="left:1390px;top:997.5px;line-height:44px;color:#6c6e77">21</div>
<div class="m" style="left:1523px;top:997.5px;line-height:44px;">&nbsp;&nbsp;&nbsp;&nbsp;&nbsp;&nbsp;&nbsp;&nbsp;&nbsp;&nbsp;&nbsp;&nbsp;<span class="p">minValue</span> <span class="pu">=</span> <span class="v">value</span><span class="pu">;</span></div>
<div class="ln" style="left:1390px;top:1041.5px;line-height:44px;color:#6c6e77">22</div>
<div class="m" style="left:1523px;top:1041.5px;line-height:44px;">&nbsp;&nbsp;&nbsp;&nbsp;&nbsp;&nbsp;&nbsp;&nbsp;&nbsp;&nbsp;&nbsp;&nbsp;<span class="p">minKey</span> <span class="pu">=</span> <span class="v">key</span><span class="pu">;</span></div>
<div class="ln" style="left:1390px;top:1085.5px;line-height:44px;color:#6c6e77">23</div>
<div class="m" style="left:1523px;top:1085.5px;line-height:44px;">&nbsp;&nbsp;&nbsp;&nbsp;&nbsp;&nbsp;&nbsp;&nbsp;<span class="pu">}</span></div>
<div class="ln" style="left:1390px;top:1129.5px;line-height:44px;color:#6c6e77">24</div>
<div class="m" style="left:1523px;top:1129.5px;line-height:44px;">&nbsp;&nbsp;&nbsp;&nbsp;<span class="pu">}</span></div>
<div class="ln" style="left:1390px;top:1173.5px;line-height:44px;color:#6c6e77">25</div>
<div class="m" style="left:1523px;top:1173.5px;line-height:44px;">&nbsp;&nbsp;&nbsp;&nbsp;<span class="kw">return</span> <span class="pu">{</span></div>
<div class="ln" style="left:1390px;top:1217.5px;line-height:44px;color:#6c6e77">26</div>
<div class="m" style="left:1523px;top:1217.5px;line-height:44px;">&nbsp;&nbsp;&nbsp;&nbsp;&nbsp;&nbsp;&nbsp;&nbsp;<span class="pu">minValue, minKey</span></div>
<div class="ln" style="left:1390px;top:1261.5px;line-height:44px;color:#6c6e77">27</div>
<div class="m" style="left:1523px;top:1261.5px;line-height:44px;">&nbsp;&nbsp;&nbsp;&nbsp;<span class="pu">}</span></div>
<div class="ln" style="left:1390px;top:1305.5px;line-height:44px;color:#6c6e77">28</div>
<div class="m" style="left:1523px;top:1305.5px;line-height:44px;"><span class="pu">}</span></div>
<div class="ln" style="left:1390px;top:1349.5px;line-height:44px;color:#6c6e77">29</div>
<div class="m" style="left:1523px;top:1349.5px;line-height:44px;"></div>
<div style="left:2066px;top:778px;width:3px;height:40px;background:#f4f4f4"></div>
<svg style="left:0;top:0" width="1" height="1"><circle cx="1539" cy="743" r="8.5" fill="#e9e9ec"/><rect x="1534.5" y="749" width="9" height="8" rx="1" fill="#1b1c21" stroke="#e9e9ec" stroke-width="2"/></svg>
<div style="left:1373px;top:184px;width:1631px;height:44px;background:#1b1c21"></div>
<div style="left:1373px;top:227px;width:1631px;height:2px;background:#2c2e34"></div>
<div class="ln" style="left:1390px;top:185.5px;line-height:44px">2</div>
<div class="m" style="left:1523px;top:185.5px;line-height:44px;"><span class="kw">function</span> <span class="fn">solution</span><span class="pu">(</span><span class="p">inp</span><span class="pu">)</span> <span class="pu">{</span></div>
<div style="left:484px;top:1404px;width:2548px;height:468px;background:#1b1c21;border-radius:7px"></div>
<div style="left:500px;top:1422px;width:100px;height:52px;background:#2e3037;border-radius:9px"></div>
<div class="t" style="left:524px;top:1422.0px;line-height:52px;color:#fff;font-weight:bold;-webkit-text-stroke:0.6px currentColor;font-size:26px">输出</div>
<div class="m" style="left:524px;top:1492.0px;line-height:44px;color:#7aa8f5">true</div>
<div class="m" style="left:524px;top:1536.5px;line-height:44px;color:#7aa8f5">true</div>
<svg style="left:0;top:0" width="1" height="1"><path d="M2977.5 1441.5l13 13M2990.5 1441.5l-13 13" stroke="#e3e4e8" stroke-width="3.4" stroke-linecap="round"/></svg>
<div style="left:3044px;top:84px;width:699px;height:1800px;background:#1b1c20;border-radius:7px 7px 0 0"></div>
<div style="left:3044px;top:1400px;width:699px;height:484px;background:linear-gradient(180deg,#1b1c20 0%,#1f2026 40%,#25262d 75%,#25262d 100%)"></div>
<svg style="left:0;top:0" width="1" height="1"><path d="M3092 116v5M3092 135v5M3080 128h5M3099 128h5M3083.5 119.5l3.5 3.5M3100.5 119.5l-3.5 3.5M3100.5 136.5l-3.5-3.5" stroke="#f0f0f3" stroke-width="2.8" stroke-linecap="round"/><path d="M3081.5 138l11.5-10.5" stroke="#f0f0f3" stroke-width="3.2" stroke-linecap="round"/></svg>
<div class="t" style="left:3124px;top:106.0px;line-height:44px;color:#f3f3f5;font-weight:bold;-webkit-text-stroke:0.6px currentColor;font-size:28px">AI 助手</div>
<svg style="left:0;top:0" width="1" height="1"><defs><linearGradient id="nc" x1="0" y1="0" x2="1" y2="0"><stop offset="0" stop-color="#4e8df5"/><stop offset=".6" stop-color="#e9a37a"/><stop offset="1" stop-color="#d564d8"/></linearGradient></defs>
<path d="M3577 141h-13.5a2 2 0 0 1-2-2v-11a13 13 0 0 1 26 0v2" fill="none" stroke="url(#nc)" stroke-width="2.6" stroke-linecap="round"/>
<path d="M3568 126.5h12M3568 131.5h9M3568 136.5h6" stroke="url(#nc)" stroke-width="2.4" stroke-linecap="round"/>
<path d="M3584.5 133.5v9.5M3580 138.2h9.5" stroke="#e25ec6" stroke-width="2.6" stroke-linecap="round"/>
<path d="M3622 123.5a14 14 0 1 1 -1.5 9" fill="none" stroke="#e6e7ea" stroke-width="2.6" stroke-linecap="round"/>
<path d="M3617.5 125l4.8 -5.5l1.8 6.8z" fill="#e6e7ea"/>
<path d="M3633 120v8.5h7.5" fill="none" stroke="#e6e7ea" stroke-width="2.6" stroke-linecap="round"/>
<path d="M3681 121l14 14M3695 121l-14 14" stroke="#e6e7ea" stroke-width="3.6" stroke-linecap="round"/>
</svg>
<div class="t" style="left:3084px;top:180.0px;line-height:48px;color:#dfe0e4;-webkit-text-stroke:0.3px currentColor"><span style="font-family:'Liberation Mono',monospace;font-weight:bold;color:#eceef2;background:#2d2f36;border:2px solid #3f414a;border-radius:8px;padding:0 6px;margin:0;display:inline-block;line-height:34px">getMapMinValueKey</span> 来找到出现次数最少的</div>
<div class="t" style="left:3084px;top:228.0px;line-height:48px;color:#dfe0e4;-webkit-text-stroke:0.3px currentColor">数字。</div>
<div class="t" style="left:3084px;top:293.0px;line-height:48px;color:#dfe0e4;-webkit-text-stroke:0.3px currentColor">从代码的正确性角度来看，目前存在一个小问</div>
<div class="t" style="left:3084px;top:341.0px;line-height:48px;color:#dfe0e4;-webkit-text-stroke:0.3px currentColor">题。在 <span style="font-family:'Liberation Mono',monospace;font-weight:bold;color:#eceef2;background:#2d2f36;border:2px solid #3f414a;border-radius:8px;padding:0 6px;margin:0;display:inline-block;line-height:34px">getMapMinValueKey</span> 函数中，您是在</div>
<div class="t" style="left:3084px;top:389.0px;line-height:48px;color:#dfe0e4;-webkit-text-stroke:0.3px currentColor">找出现次数最少的键值对，但题目要求是找到只</div>
<div class="t" style="left:3084px;top:437.0px;line-height:48px;color:#dfe0e4;-webkit-text-stroke:0.3px currentColor">出现一次的数字，所以这里的逻辑不太准确。</div>
<div class="t" style="left:3084px;top:501.0px;line-height:48px;color:#dfe0e4;-webkit-text-stroke:0.3px currentColor">从代码风格和效率角度，您可以考虑以下几点优</div>
<div class="t" style="left:3084px;top:549.0px;line-height:48px;color:#dfe0e4;-webkit-text-stroke:0.3px currentColor">化：</div>
<div style="left:3084px;top:612px;width:563px;height:96px;background:#26282e;border-radius:8px"></div>
<div style="left:3656px;top:612px;width:48px;height:48px;background:#26282e;border-radius:8px"></div>
<svg style="left:0;top:0" width="1" height="1"><defs><linearGradient id="bulb" x1="0" y1="0" x2="1" y2="1"><stop offset="0" stop-color="#4e8df5"/><stop offset=".7" stop-color="#7aa0f0"/><stop offset="1" stop-color="#e9a37a"/></linearGradient><linearGradient id="star" x1="0" y1="0" x2="1" y2="1"><stop offset="0" stop-color="#f5a45a"/><stop offset="1" stop-color="#e0609a"/></linearGradient></defs>
<path d="M0 0"/><path d="M3672.5 640A8.5 8.5 0 1 1 3682 625.5" fill="none" stroke="url(#bulb)" stroke-width="2.4" stroke-linecap="round"/><path d="M3672.5 640v3.5M3678.5 638v5.5" fill="none" stroke="url(#bulb)" stroke-width="2.2"/><path d="M3672 644.5h8M3673 648h6" stroke="#c9a0b0" stroke-width="1.8"/><path d="M3686 623Q3687 631 3694 632Q3687 633 3686 641Q3685 633 3678 632Q3685 631 3686 623z" fill="url(#star)"/></svg>
<div class="t" style="left:3101px;top:613.0px;line-height:48px;color:#dfe0e4;-webkit-text-stroke:0.3px currentColor">1.</div>
<div class="t" style="left:3132px;top:613.0px;line-height:48px;color:#dfe0e4;-webkit-text-stroke:0.3px currentColor">可以给函数和变量起更具描述性的名字，以</div>
<div class="t" style="left:3132px;top:661.0px;line-height:48px;color:#dfe0e4;-webkit-text-stroke:0.3px currentColor">提高代码的可读性。</div>
<div class="t" style="left:3101px;top:709.0px;line-height:48px;color:#dfe0e4;-webkit-text-stroke:0.3px currentColor">2.</div>
<div class="t" style="left:3132px;top:709.0px;line-height:48px;color:#dfe0e4;-webkit-text-stroke:0.3px currentColor">在遍历 <span style="font-family:'Liberation Mono',monospace;font-weight:bold;color:#eceef2;background:#2d2f36;border:2px solid #3f414a;border-radius:8px;padding:0 6px;margin:0;display:inline-block;line-height:34px">Map</span> 时，可以直接使用 <span style="font-family:'Liberation Mono',monospace;font-weight:bold;color:#eceef2;background:#2d2f36;border:2px solid #3f414a;border-radius:8px;padding:0 6px;margin:0;display:inline-block;line-height:34px">for...of</span></div>
<div class="t" style="left:3132px;top:757.0px;line-height:48px;color:#dfe0e4;-webkit-text-stroke:0.3px currentColor">循环，而不需要通过 <span style="font-family:'Liberation Mono',monospace;font-weight:bold;color:#eceef2;background:#2d2f36;border:2px solid #3f414a;border-radius:8px;padding:0 6px;margin:0;display:inline-block;line-height:34px">entries</span> 方法。</div>
<div class="t" style="left:3084px;top:820.0px;line-height:48px;color:#dfe0e4;-webkit-text-stroke:0.3px currentColor">以下是修改后的代码示例：</div>
<div style="left:3084px;top:884px;width:620px;height:813px;background:#282a31;border-radius:10px 10px 0 0"></div>
<div style="left:3084px;top:952px;width:620px;height:2px;background:#33353c"></div>
<div class="t" style="left:3101px;top:896.0px;line-height:44px;color:#e2d45a;font-size:19px;-webkit-text-stroke:0.5px currentColor">JS</div>
<div class="t" style="left:3135px;top:895.0px;line-height:44px;color:#e9eaee;font-size:28.5px;-webkit-text-stroke:0.5px currentColor">javascript</div>
<svg style="left:0;top:0" width="1" height="1">
<rect x="3524" y="910" width="13" height="15" rx="1.5" fill="none" stroke="#c9cbd0" stroke-width="2.2"/><path d="M3529 906h10.5a1.5 1.5 0 0 1 1.5 1.5v12" fill="none" stroke="#c9cbd0" stroke-width="2.2"/>
<path d="M3576 907h23v20h-23M3576 917h12M3584 913l4 4l-4 4M3594 907v20" fill="none" stroke="#c9cbd0" stroke-width="2.2"/>
<path d="M3628 907v18" stroke="#3e4047" stroke-width="2"/>
<path d="M3662.5 922A8.5 8.5 0 1 1 3672 907.5" fill="none" stroke="url(#bulb)" stroke-width="2.4" stroke-linecap="round"/><path d="M3662.5 922v3.5M3668.5 920v5.5" fill="none" stroke="url(#bulb)" stroke-width="2.2"/><path d="M3662 926.5h8M3663 930h6" stroke="#c9a0b0" stroke-width="1.8"/><path d="M3676 905Q3677 913 3684 914Q3677 915 3676 923Q3675 915 3668 914Q3675 913 3676 905z" fill="url(#star)"/>
</svg>
<div class="m" style="left:3101px;top:975.2px;line-height:36px;"><span class="kw">function</span> <span class="fn">solution</span><span class="pu">(</span><span class="p">inp</span><span class="pu">)</span> <span class="pu">{</span></div>
<div class="m" style="left:3101px;top:1011.2px;line-height:36px;">&nbsp;&nbsp;&nbsp;&nbsp;<span class="c">// Edit your code here</span></div>
<div class="m" style="left:3101px;top:1047.2px;line-height:36px;">&nbsp;&nbsp;&nbsp;&nbsp;<span class="kw">const</span> <span class="v">map</span> <span class="pu">=</span> <span class="kw">new</span> <span class="fn">Map</span><span class="pu">();</span></div>
<div class="m" style="left:3101px;top:1083.2px;line-height:36px;">&nbsp;&nbsp;&nbsp;&nbsp;<span class="p">inp</span><span class="pu">.</span><span class="fn">forEach</span><span class="pu">((</span><span class="p">val</span><span class="pu">)</span> <span class="kw">=&gt;</span> <span class="pu">{</span></div>
<div class="m" style="left:3101px;top:1119.2px;line-height:36px;">&nbsp;&nbsp;&nbsp;&nbsp;&nbsp;&nbsp;&nbsp;&nbsp;<span class="kw">const</span> <span class="v">mapVal</span> <span class="pu">=</span> <span class="p">map</span><span class="pu">.</span><span class="fn">get</span><span class="pu">(</span><span class="p">val</span><span class="pu">);</span></div>
<div class="m" style="left:3101px;top:1155.2px;line-height:36px;">&nbsp;&nbsp;&nbsp;&nbsp;&nbsp;&nbsp;&nbsp;&nbsp;<span class="kw">if</span> <span class="pu">(</span><span class="p">mapVal</span><span class="pu">)</span> <span class="pu">{</span></div>
<div class="m" style="left:3101px;top:1191.2px;line-height:36px;">&nbsp;&nbsp;&nbsp;&nbsp;&nbsp;&nbsp;&nbsp;&nbsp;&nbsp;&nbsp;&nbsp;&nbsp;<span class="p">map</span><span class="pu">.</span><span class="fn">set</span><span class="pu">(</span><span class="p">val</span><span class="pu">,</span> <span class="p">mapVal</span> <span class="pu">+</span></div>
<div class="m" style="left:3101px;top:1227.2px;line-height:36px;">&nbsp;&nbsp;&nbsp;&nbsp;&nbsp;&nbsp;&nbsp;&nbsp;&nbsp;&nbsp;&nbsp;&nbsp;<span class="n">1</span><span class="pu">);</span></div>
<div class="m" style="left:3101px;top:1263.2px;line-height:36px;">&nbsp;&nbsp;&nbsp;&nbsp;&nbsp;&nbsp;&nbsp;&nbsp;<span class="pu">}</span> <span class="kw">else</span> <span class="pu">{</span></div>
<div class="m" style="left:3101px;top:1299.2px;line-height:36px;">&nbsp;&nbsp;&nbsp;&nbsp;&nbsp;&nbsp;&nbsp;&nbsp;&nbsp;&nbsp;&nbsp;&nbsp;<span class="p">map</span><span class="pu">.</span><span class="fn">set</span><span class="pu">(</span><span class="p">val</span><span class="pu">,</span> <span class="n">1</span><span class="pu">);</span></div>
<div class="m" style="left:3101px;top:1335.2px;line-height:36px;">&nbsp;&nbsp;&nbsp;&nbsp;&nbsp;&nbsp;&nbsp;&nbsp;<span class="pu">}</span></div>
<div class="m" style="left:3101px;top:1371.2px;line-height:36px;">&nbsp;&nbsp;&nbsp;&nbsp;<span class="pu">});</span></div>
<div class="m" style="left:3101px;top:1407.2px;line-height:36px;"></div>
<div class="m" style="left:3101px;top:1443.2px;line-height:36px;">&nbsp;&nbsp;&nbsp;&nbsp;<span class="kw">for</span> <span class="pu">(</span><span class="kw">const</span> <span class="pu">[</span><span class="v">key</span><span class="pu">,</span> <span class="v">value</span><span class="pu">]</span> <span class="kw">of</span> <span class="p">map</span><span class="pu">)</span></div>
<div class="m" style="left:3101px;top:1479.2px;line-height:36px;">&nbsp;&nbsp;&nbsp;&nbsp;<span class="pu">{</span></div>
<div class="m" style="left:3101px;top:1515.2px;line-height:36px;">&nbsp;&nbsp;&nbsp;&nbsp;&nbsp;&nbsp;&nbsp;&nbsp;<span class="kw">if</span> <span class="pu">(</span><span class="p">value</span> <span class="pu">===</span> <span class="n">1</span><span class="pu">)</span> <span class="pu">{</span></div>
<div class="m" style="left:3101px;top:1551.2px;line-height:36px;">&nbsp;&nbsp;&nbsp;&nbsp;&nbsp;&nbsp;&nbsp;&nbsp;&nbsp;&nbsp;&nbsp;&nbsp;<span class="kw">return</span> <span class="p">key</span><span class="pu">;</span></div>
<div class="m" style="left:3101px;top:1587.2px;line-height:36px;">&nbsp;&nbsp;&nbsp;&nbsp;&nbsp;&nbsp;&nbsp;&nbsp;<span class="pu">}</span></div>
<div class="m" style="left:3101px;top:1623.2px;line-height:36px;">&nbsp;&nbsp;&nbsp;&nbsp;<span class="pu">}</span></div>
<div class="m" style="left:3101px;top:1659.2px;line-height:36px;"><span class="pu">}</span></div>
<div style="left:3732px;top:402px;width:12px;height:860px;background:#44464c;border-radius:6px"></div>
<div style="left:3044px;top:1690px;width:699px;height:80px;background:radial-gradient(ellipse at 65% 40%,rgba(90,60,80,.16),rgba(0,0,0,0) 70%)"></div>
<div style="left:3068px;top:1726px;width:652px;height:136px;border-radius:12px;background:linear-gradient(90deg,#3b74dc 0%,#5b8ae6 40%,#c9c3d6 62%,#e4a078 82%,#e08a5a 94%,#9b48e4 100%)"></div>
<div style="left:3070px;top:1728px;width:648px;height:132px;border-radius:10px;background:#1b1c21"></div>
<div style="left:3717.5px;top:1742px;width:2.5px;height:106px;background:linear-gradient(180deg,#9b48e4 0%,#c77ab0 50%,#e08a5a 100%)"></div>
<div class="t" style="left:3091px;top:1744.0px;line-height:44px;color:#8b8d95;font-size:27px">你可以问我问题</div>
<svg style="left:0;top:0" width="1" height="1"><path d="M3663 1826l31-17l-6 30l-10-5l-4 7l-1-9z" fill="#6c707a"/><path d="M3677 1834l14-21" stroke="#1b1c21" stroke-width="1.6"/></svg>
<div style="left:3756px;top:84px;width:64px;height:112px;border-radius:32px;background:linear-gradient(180deg,#a3aad6 0%,#b0a8c0 35%,#d39a7c 60%,#b77dbb 85%,#a77ac0 100%)"></div>
<div style="left:3759px;top:87px;width:58px;height:106px;border-radius:29px;background:#1a1b20"></div>
<svg style="left:0;top:0" width="1" height="1">
<defs><linearGradient id="wand" x1="0" y1="1" x2="1" y2="0"><stop offset="0" stop-color="#c85ee0"/><stop offset="1" stop-color="#f0a070"/></linearGradient></defs>
<path d="M3788 110v4" stroke="#5e9cf3" stroke-width="3.4" stroke-linecap="round"/>
<path d="M3779.5 113.5l2.5 2.5M3796.5 113.5l-2.5 2.5" stroke="#5e9cf3" stroke-width="3.4" stroke-linecap="round"/>
<path d="M3776 121.8h4.5M3795.5 121.8h4.5" stroke="#eeb08a" stroke-width="3.4" stroke-linecap="round"/>
<path d="M3794 127.8l2.8 2.8" stroke="#ef9a62" stroke-width="3.4" stroke-linecap="round"/>
<path d="M3788 129.5v4.5" stroke="#b85ad8" stroke-width="3.4" stroke-linecap="round"/>
<path d="M3777 133l11-10" stroke="url(#wand)" stroke-width="3.6" stroke-linecap="round"/>
</svg>
<div class="t" style="left:3776px;top:143.0px;line-height:40px;color:#fff;font-weight:bold;-webkit-text-stroke:0.6px currentColor;font-size:25px">AI</div>
<svg style="left:0;top:0" width="1" height="1">
<path d="M3781.5 232a6.5 6.5 0 0 1 13 0" fill="none" stroke="#dcdde2" stroke-width="2.4"/>
<path d="M3779 232h18v9.5a9 9 0 0 1 -18 0z" fill="none" stroke="#dcdde2" stroke-width="2.4" stroke-linejoin="round"/>
<path d="M3788 236v16M3775 240.5h4M3797 240.5h4M3776 229.5l3 2.5M3800 229.5l-3 2.5M3776 252l3.5-3.5M3800 252l-3.5-3.5" stroke="#dcdde2" stroke-width="2.4" stroke-linecap="round"/>
</svg>
<div style="left:3760px;top:1161px;width:90px;height:72px;border-radius:36px;background:linear-gradient(135deg,#a6568a 0%,#983f70 55%,#8a3566 100%)"></div>
<svg style="left:0;top:0" width="1" height="1"><path d="M3787 1182h15v10h-15zM3794.5 1177v22" fill="none" stroke="#c9c9d0" stroke-width="2.6"/><path d="M3807 1179h3a2.5 2.5 0 0 1 2.5 2.5v4" fill="none" stroke="#c9c9d0" stroke-width="2.2"/><path d="M3789 1202v4a2.5 2.5 0 0 0 2.5 2.5h5" fill="none" stroke="#c9c9d0" stroke-width="2.2"/><path d="M3802 1210l7.5-18l7.5 18M3805 1203.5h9" fill="none" stroke="#c9c9d0" stroke-width="2.6"/></svg>
<div style="left:3756px;top:1808px;width:64px;height:64px;background:#393b44;border-radius:10px"></div>
<svg style="left:0;top:0" width="1" height="1"><rect x="3776.5" y="1828" width="24" height="24" rx="1" fill="none" stroke="#e8e9ee" stroke-width="3"/><rect x="3776" y="1841" width="25" height="12" fill="#e8e9ee"/></svg>
<div class="t" style="left:3563px;top:1850.0px;line-height:40px;color:#e6e6ea;font-size:25px">掘金技术社区 @ txc</div>
<div style="left:0px;top:1884px;width:3830px;height:46px;background:#3b3d46"></div>
<svg style="left:0;top:0" width="1" height="1"><circle cx="62" cy="1907.5" r="12" fill="#a3a6b0"/><path d="M57.5 1903l9 9M66.5 1903l-9 9" stroke="#3b3d46" stroke-width="3"/><circle cx="119" cy="1907.5" r="12" fill="#a3a6b0"/><path d="M119 1900.5v8" stroke="#3b3d46" stroke-width="3"/><circle cx="119" cy="1913" r="1.8" fill="#3b3d46"/></svg>
<div class="t" style="left:83px;top:1884.5px;line-height:46px;color:#a3a6b0;font-size:26px;-webkit-text-stroke:0.5px currentColor">0</div>
<div class="t" style="left:140px;top:1884.5px;line-height:46px;color:#a3a6b0;font-size:26px;-webkit-text-stroke:0.5px currentColor">0</div>
<div class="t" style="left:3188px;top:1884.5px;line-height:46px;color:#a3a5ad;font-size:25px;-webkit-text-stroke:0.4px currentColor">行 16，列 36</div>
<div class="t" style="left:3366px;top:1884.5px;line-height:46px;color:#a3a5ad;font-size:25px;-webkit-text-stroke:0.4px currentColor">空格: 4</div>
<div class="t" style="left:3475px;top:1884.5px;line-height:46px;color:#a3a5ad;font-size:25px;-webkit-text-stroke:0.4px currentColor">UTF-8</div>
<div class="t" style="left:3580px;top:1884.5px;line-height:46px;color:#a3a5ad;font-size:25px;-webkit-text-stroke:0.4px currentColor">LF</div>
<div class="t" style="left:3637px;top:1884.5px;line-height:46px;color:#a3a5ad;font-size:25px;-webkit-text-stroke:0.4px currentColor">{ }</div>
<div class="t" style="left:3675px;top:1884.5px;line-height:46px;color:#a3a5ad;font-size:25px;-webkit-text-stroke:0.4px currentColor">JavaScript</div>
</body></html>
